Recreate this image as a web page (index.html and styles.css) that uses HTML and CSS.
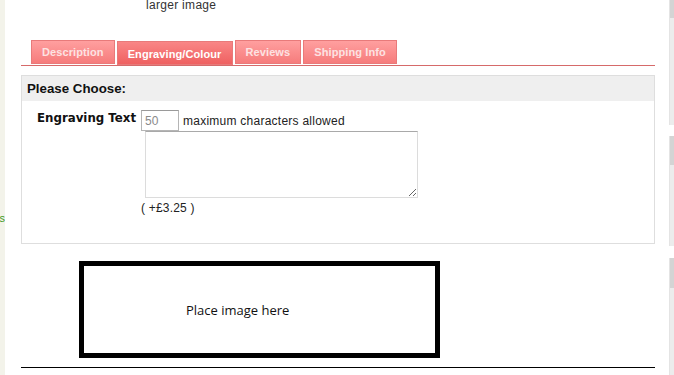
FILE: index.html
```html
<!DOCTYPE html>
<html>
<head>
<meta charset="utf-8">
<link rel="stylesheet" href="styles.css">
</head>
<body>
<div class="page">
  <aside class="side">
    <div class="side-row"><span class="side-link">Options</span></div>
  </aside>
  <main class="main">
    <div class="caption">larger image</div>
    <nav class="tabs">
      <a class="tab">Description</a>
      <a class="tab active">Engraving/Colour</a>
      <a class="tab">Reviews</a>
      <a class="tab">Shipping Info</a>
    </nav>
    <section class="panel">
      <h2 class="panel-head">Please Choose:</h2>
      <div class="panel-body">
        <div class="label">Engraving Text</div>
        <div class="field">
          <div class="field-row">
            <input class="max-input" type="text" value="50">
            <span class="max-text">maximum characters allowed</span>
          </div>
          <textarea class="engrave"></textarea>
          <div class="price">( +£3.25 )</div>
        </div>
      </div>
    </section>
    <div class="image-box"><span>Place image here</span></div>
    <hr class="rule">
  </main>
  <div class="scroll-strip">
    <div class="strip-box b1"><div class="thumb t1"></div></div>
    <div class="strip-box b2"><div class="thumb t2"></div></div>
    <div class="strip-box b3"><div class="thumb t3"></div></div>
  </div>
</div>
</body>
</html>
```

FILE: styles.css
```css
* { box-sizing: border-box; }
html, body {
  margin: 0;
  padding: 0;
  background: #fff;
  height: 375px;
  overflow: hidden;
}
body {
  font-family: "Liberation Sans", Arial, sans-serif;
  font-size: 12px;
  color: #222;
}
.page {
  display: flex;
  height: 375px;
}
.side {
  width: 5px;
  flex: none;
  background: #f3f3ea;
  overflow: hidden;
}
.side-row {
  display: flex;
  justify-content: flex-end;
  margin-top: 212px;
  width: 5px;
}
.side-link {
  flex: none;
  white-space: nowrap;
  font-size: 11px;
  line-height: 13px;
  color: #3f9a1e;
}
.main {
  width: 634px;
  flex: none;
  margin-left: 16px;
}
.caption {
  margin-top: -2px;
  margin-left: 125px;
  line-height: 14px;
  letter-spacing: 0.3px;
  color: #333;
}
.tabs {
  display: flex;
  gap: 2px;
  margin-top: 28px;
  padding-left: 10px;
  padding-bottom: 1px;
  border-bottom: 1px solid #d66a6a;
  align-items: flex-start;
}
.tab {
  display: block;
  height: 24px;
  padding: 0 10px;
  border: 1px solid #e87a7a;
  background: linear-gradient(#ff9f9f, #f67c7c);
  color: #fde2e2;
  font-weight: bold;
  font-size: 11px;
  letter-spacing: 0.1px;
  line-height: 22px;
  white-space: nowrap;
}
.tab.active {
  margin-top: 1px;
  margin-bottom: -1px;
  background: linear-gradient(#f98686, #ef6161);
  color: #fff;
  line-height: 24px;
}
.panel {
  margin-top: 9px;
  border: 1px solid #dedede;
}
.panel-head {
  margin: 0;
  height: 25px;
  padding-left: 5px;
  background: #efefef;
  font-size: 13.3px;
  line-height: 25px;
  font-weight: bold;
  color: #111;
}
.panel-body {
  display: flex;
  align-items: flex-start;
  gap: 5px;
  padding: 9px 0 28px 15px;
}
.label {
  width: 99px;
  margin-top: 2px;
  font-family: "DejaVu Sans", Verdana, sans-serif;
  font-weight: bold;
  font-size: 11.8px;
  line-height: 13px;
  white-space: nowrap;
  color: #111;
}
.field {
  display: flex;
  flex-direction: column;
  align-items: flex-start;
}
.field-row {
  display: flex;
  align-items: center;
  gap: 4px;
}
.max-input {
  width: 38px;
  height: 21px;
  margin: 0;
  padding: 0 0 0 3px;
  border: 1px solid #b5b5b5;
  border-top-color: #9a9a9a;
  font-family: "Liberation Sans", Arial, sans-serif;
  font-size: 12px;
  color: #8a8a8a;
  outline: none;
}
.max-text {
  margin-top: 1px;
  line-height: 16px;
  letter-spacing: 0.25px;
  color: #222;
}
.engrave {
  display: block;
  margin: 0 0 0 4px;
  width: 273px;
  height: 67px;
  border: 1px solid #dcdcdc;
  border-top-color: #a9a9a9;
  padding: 2px;
  font-family: "Liberation Sans", Arial, sans-serif;
  font-size: 12px;
}
.price {
  margin-top: 3px;
  line-height: 14px;
  letter-spacing: 0.2px;
  color: #222;
}
.image-box {
  display: flex;
  align-items: center;
  width: 361px;
  height: 97px;
  margin-top: 17px;
  margin-left: 58px;
  border: 5px solid #000;
  padding-left: 102px;
  font-family: "Open Sans", sans-serif;
  font-size: 13px;
  color: #111;
}
.rule {
  margin: 9px 0 0 0;
  height: 0;
  border: 0;
  border-top: 1px solid #000;
}
.scroll-strip {
  margin-left: auto;
  width: 5px;
  flex: none;
  display: flex;
  flex-direction: column;
}
.strip-box {
  background: #ececec;
  border-left: 1px solid #e4e4e4;
}
.b1 { height: 125px; }
.b2 { height: 110px; margin-top: 11px; }
.b3 { flex: 1; margin-top: 12px; }
.thumb { background: #d4d4d4; }
.t1 { height: 18px; }
.t2 { height: 29px; }
.t3 { height: 30px; }
```
